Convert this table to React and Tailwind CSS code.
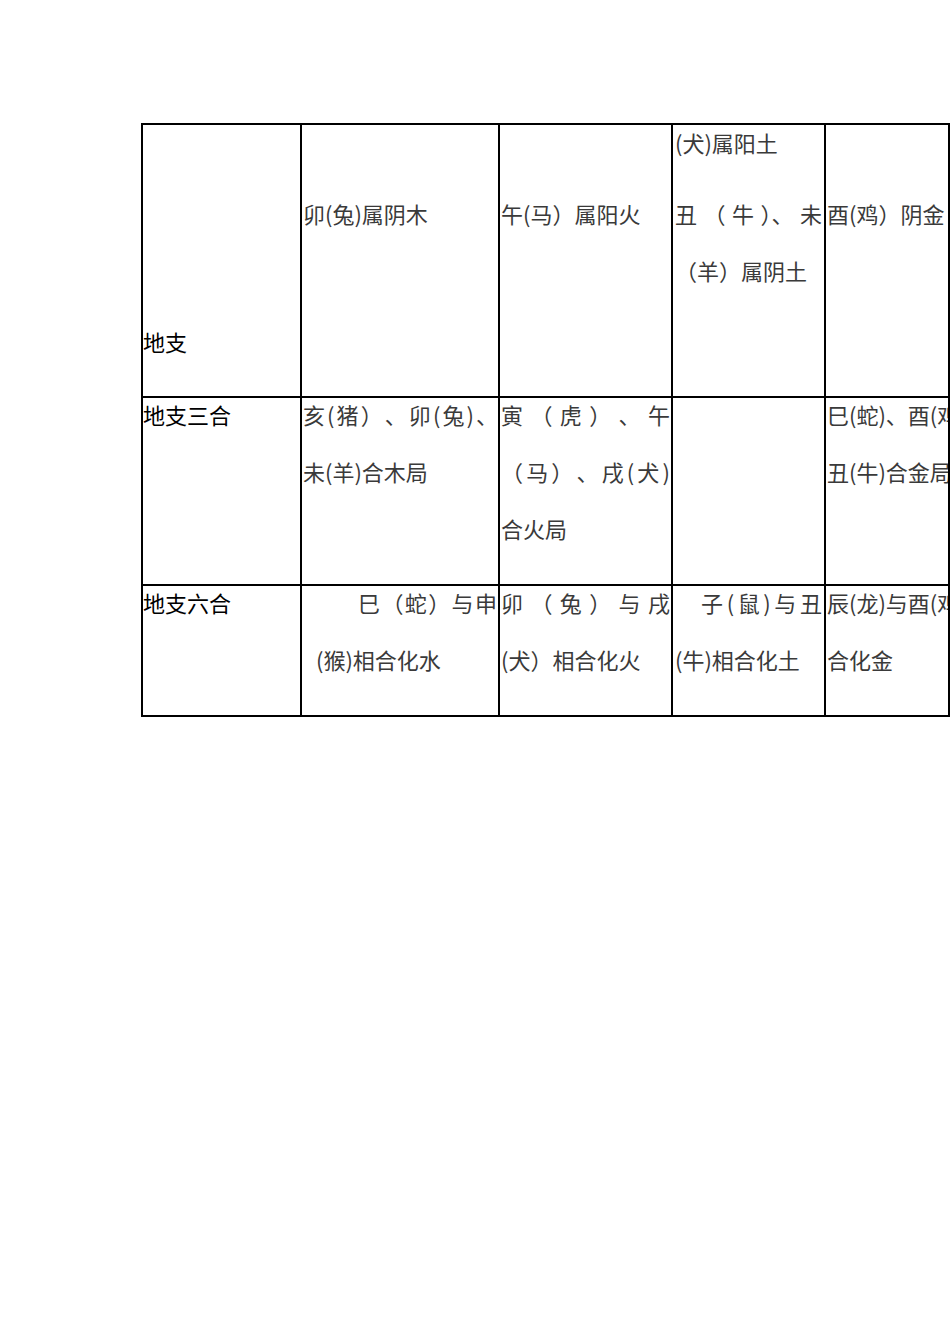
import React from 'react';

// one text line inside a cell; "spread" lines are justified across the cell width
function Line({ text, spread = false, className = '' }) {
    if (spread) {
        const parts = Array.isArray(text) ? text : Array.from(text);
        return (
            <div className={`flex justify-between h-[28px] leading-[28px] whitespace-nowrap ${className}`}>
                {parts.map((ch, i) => (
                    <span key={i}>{ch}</span>
                ))}
            </div>
        );
    }
    return <div className={`h-[28px] leading-[28px] whitespace-nowrap ${className}`}>{text}</div>;
}

function Cell({ children, className = '' }) {
    return <div className={`bg-white overflow-hidden flex flex-col ${className}`}>{children}</div>;
}

export default function App() {
    return (
        <div
            className="w-[950px] h-[1344px] bg-white overflow-hidden text-[22px]"
            style={{ fontFamily: '"Noto Sans CJK SC", "Noto Sans", sans-serif' }}
        >
            <div className="mt-[123px] ml-[141px] w-[809px] grid grid-cols-[157px_196px_171px_151px_122px] grid-rows-[271px_186px_129px] gap-[2px] p-[2px] bg-black text-[#3a3a3a]">
                {/* row 1 */}
                <Cell className="pt-[202px] text-black">
                    <Line text="地支" />
                </Cell>
                <Cell className="pt-[74px] pl-px">
                    <Line text="卯(兔)属阴木" />
                </Cell>
                <Cell className="pt-[74px] pl-px">
                    <Line text="午(马）属阳火" />
                </Cell>
                <Cell className="pt-[3px] pl-[2px] pr-[2px]">
                    <Line text="(犬)属阳土" />
                    <Line text={['丑', '（', '牛', '）、', '未']} spread className="mt-[43px]" />
                    <Line text="（羊）属阴土" className="mt-[29px]" />
                </Cell>
                <Cell className="pt-[74px] pl-px">
                    <Line text="酉(鸡）阴金" />
                </Cell>

                {/* row 2 */}
                <Cell className="pt-[2px] gap-[29px] text-black">
                    <Line text="地支三合" />
                </Cell>
                <Cell className="pt-[2px] gap-[29px] pl-px">
                    <Line text="亥(猪）、卯(兔)、" spread />
                    <Line text="未(羊)合木局" />
                </Cell>
                <Cell className="pt-[2px] gap-[29px] pl-px pr-px">
                    <Line text="寅（虎）、午" spread />
                    <Line text="（马）、戌(犬)" spread />
                    <Line text="合火局" />
                </Cell>
                <Cell />
                <Cell className="pt-[2px] gap-[29px] pl-px">
                    <Line text="巳(蛇)、酉(鸡）、" />
                    <Line text="丑(牛)合金局" />
                </Cell>

                {/* row 3 */}
                <Cell className="pt-[2px] gap-[29px] text-black">
                    <Line text="地支六合" />
                </Cell>
                <Cell className="pt-[2px] gap-[29px] pr-px">
                    <Line text="巳（蛇）与申" spread className="pl-[56px]" />
                    <Line text="(猴)相合化水" className="pl-[14px]" />
                </Cell>
                <Cell className="pt-[2px] gap-[29px] pl-px pr-px">
                    <Line text="卯（兔）与戌" spread />
                    <Line text="(犬）相合化火" />
                </Cell>
                <Cell className="pt-[2px] gap-[29px] pl-[2px] pr-[2px]">
                    <Line text="子(鼠)与丑" spread className="pl-[26px]" />
                    <Line text="(牛)相合化土" />
                </Cell>
                <Cell className="pt-[2px] gap-[29px] pl-px">
                    <Line text="辰(龙)与酉(鸡)" />
                    <Line text="合化金" />
                </Cell>
            </div>
        </div>
    );
}
